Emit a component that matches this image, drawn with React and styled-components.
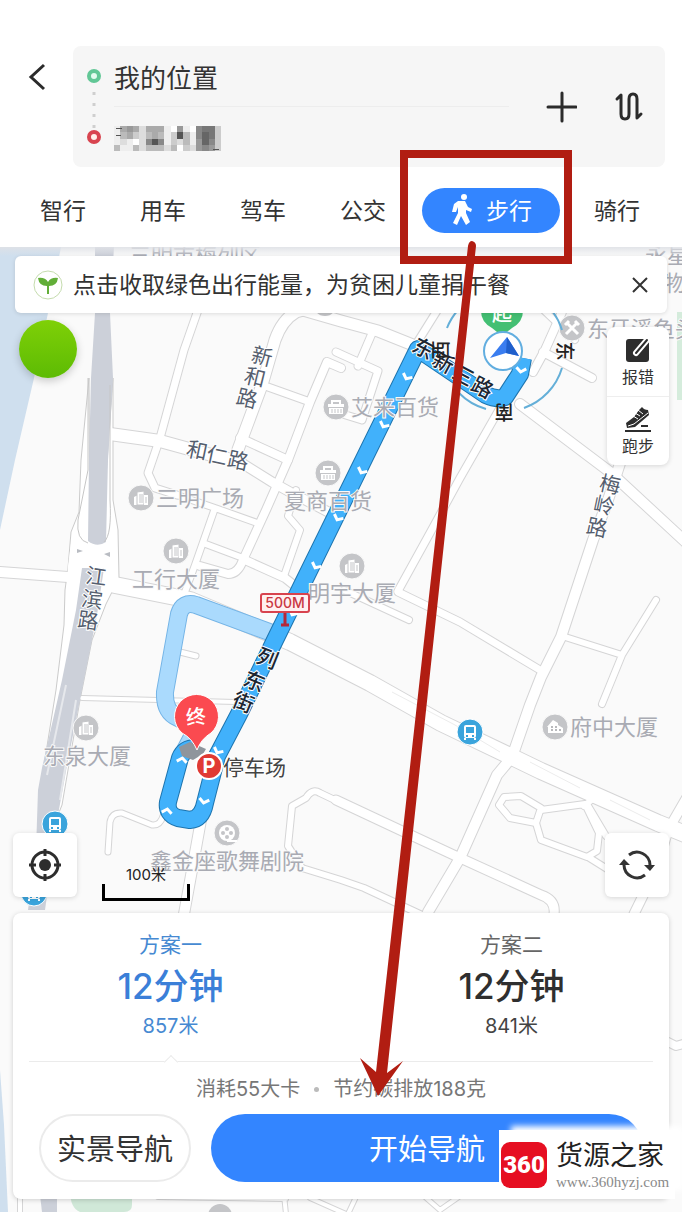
import { useState } from 'react'
import styled, { createGlobalStyle } from 'styled-components'

const tabs = ['智行', '用车', '驾车', '公交', '步行', '骑行']

const plans = [
  { name: '方案一', time: '12分钟', distance: '857米' },
  { name: '方案二', time: '12分钟', distance: '841米' }
]

const roads = [
  { d: 'M205 290L184 350L160 438L148 473L155 488L177 495', w: 7 },
  { d: 'M110 434L160 441L200 452L240 462', w: 12 },
  { d: 'M240 462L272 482L290 492L336 516', w: 9 },
  { d: 'M318 306L296 312Q282 320 275 340L262 385L236 455', w: 11 },
  { d: 'M296 308L341 321L378 331L418 347', w: 11 },
  { d: 'M268 387L310 402', w: 7 },
  { d: 'M341 368L327 362L310 402L288 460L266 510L243 560Q238 574 228 574L200 566', w: 8 },
  { d: 'M240 438L288 460', w: 8 },
  { d: 'M177 495L215 508L260 524M215 508L195 565L185 592M203 543L243 558', w: 6 },
  { d: 'M245 560L285 578L300 590', w: 8 },
  { d: 'M284 576L300 530L288 516L296 490', w: 6 },
  { d: 'M0 572L68 577', w: 10 },
  { d: 'M110 584L190 600L290 642L370 683L441 723L512 757L541 771L658 823L690 836', w: 16 },
  { d: 'M626 445L608 500L593 540L561 637L541 677L530 705L512 757L497 775L460 858L428 912', w: 10 },
  { d: 'M520 404L610 472L690 546', w: 10 },
  { d: 'M500 408L460 478L430 533L398 591', w: 7 },
  { d: 'M398 592L460 622L540 670', w: 7 },
  { d: 'M344 590L409 620', w: 6 },
  { d: 'M562 636L622 655L656 600M622 655L602 704', w: 6 },
  { d: 'M341 803L320 793Q312 788 306 798L292 806L288 846L302 868L341 880L364 888L422 915', w: 6 },
  { d: 'M336 800L400 830L458 857L541 895Q556 900 554 914', w: 9 },
  { d: 'M504 797L521 796L541 808L536 823L510 818L499 805Z', w: 6 },
  { d: 'M541 810L585 804L599 833L597 851L587 857L541 840L536 823M584 806L600 793M587 804L606 836M588 857L612 872', w: 6 },
  { d: 'M690 792L668 830L658 865L634 914', w: 9 },
  { d: 'M82 698L236 702', w: 4 },
  { d: 'M108 852L110 822Q112 812 122 813L152 825Q160 826 163 816', w: 5 },
  { d: 'M201 820L192 870L184 914', w: 10 },
  { d: 'M180 652L196 656', w: 5 },
  { d: 'M336 352L378 371L362 420L336 412M373 331L358 366', w: 7 },
  { d: 'M415 346L450 290', w: 7 },
  { d: 'M533 372L545 350L562 312M543 352L592 378', w: 8 },
  { d: 'M533 300L575 340', w: 6 },
  { d: 'M664 1040L676 1046L690 1042', w: 8 },
  { d: 'M20 1195L20 1214M158 1197L286 1199M284 1195L286 1214M310 1198L346 1214M356 1197L348 1214M424 1196L440 1210L460 1196', w: 4 }
]

const places = [
  { text: '三明广场', x: 156, y: 506, ix: 141, iy: 498 },
  { text: '工行大厦', x: 132, y: 587, ix: 176, iy: 551 },
  { text: '明宇大厦', x: 308, y: 601, ix: 352, iy: 566 },
  { text: '东泉大厦', x: 43, y: 764, ix: 86, iy: 728 },
  { text: '艾来百货', x: 351, y: 415, ix: 336, iy: 407, kind: 'shop' },
  { text: '夏商百货', x: 284, y: 509, ix: 328, iy: 473, kind: 'shop' },
  { text: '府中大厦', x: 570, y: 735, ix: 555, iy: 727, kind: 'house' },
  { text: '鑫金座歌舞剧院', x: 150, y: 869, ix: 227, iy: 833, kind: 'film' },
  { text: '东牙溪鱼头', x: 587, y: 337, ix: 572, iy: 328, kind: 'food' }
]

const streetNames = [
  { text: '新和路', turn: 14, at: [[262, 357], [255, 378], [247, 399]] },
  { text: '和仁路', turn: 12, at: [[197, 451], [217, 456], [238, 461]] },
  { text: '江滨路', turn: 8, at: [[96, 577], [92, 600], [88, 621]] },
  { text: '梅岭路', turn: 12, at: [[610, 485], [604, 506], [597, 528]] },
  { text: '列东街', turn: 22, dark: true, at: [[267, 659], [254, 682], [243, 703]] },
  { text: '东新三路', turn: 28, dark: true, at: [[423, 349], [443, 363], [463, 376], [482, 388]] }
]

const chevrons = [
  [407, 377, 26], [384, 425, 26], [362, 471, 26], [338, 518, 26], [316, 566, 26],
  [293, 613, 26], [521, 370, 10], [218, 751, 26], [204, 801, 12], [182, 760, 190], [167, 811, 190]
]

// one hex digit of grey per cell
const mosaic = [
  'ea9adaaaef9ef877c',
  'ebacdbabec5be867c',
  'edefd858ecdbe968c',
  'beebdbbbdbfcd989c'
]

function Chevron({ x, y, turn }) {
  return (
    <path
      d="M-5 -2L0 2L5 -2"
      transform={`translate(${x} ${y}) rotate(${turn})`}
      fill="none"
      stroke="#fff"
      strokeWidth="3"
    />
  )
}

function PlaceIcon({ x, y, kind }) {
  return (
    <g transform={`translate(${x} ${y})`}>
      <circle r="13" fill="#c4c5c8" stroke="#fafafa" />
      {!kind && (
        <g fill="#fff">
          <path d="M-7 7V-1L-3 -3V7Z" />
          <path d="M-4 7V-6L3 -7V7Z" stroke="#c4c5c8" />
          <path d="M3 7V-3H7V7Z" />
          <path d="M-1 -4V5M1 -4V5M5 -1V5" stroke="#c4c5c8" />
        </g>
      )}
      {kind === 'shop' && (
        <g fill="#fff">
          <path d="M-8 -3H8V0H-8ZM-7 1H7V7H-7Z" />
          <path d="M-4 -3V-6H4V-3" fill="none" stroke="#fff" strokeWidth="2" />
          <path d="M-4 2V6M-1 2V6M2 2V6M5 2V6" stroke="#c4c5c8" />
        </g>
      )}
      {kind === 'house' && (
        <g>
          <path d="M-8 0L-2 -7L3 -4V-2L8 1V6H-7V0Z" fill="#fff" />
          <path d="M-4 0H-2M0 0H2M-4 3H-2M0 3H2M4 3H6" stroke="#b8b9bc" strokeWidth="2" />
        </g>
      )}
      {kind === 'film' && (
        <g>
          <circle r="8" fill="#fff" />
          <g fill="#c4c5c8">
            <circle cy="-4" r="2" />
            <circle cy="4" r="2" />
            <circle cx="-4" r="2" />
            <circle cx="4" r="2" />
          </g>
          <path d="M0 8H10" stroke="#fff" strokeWidth="2" />
        </g>
      )}
      {kind === 'food' && (
        <path d="M-6 -6L6 6M6 -6L-6 6M-7 -3L-3 -7M3 -7L7 -3" stroke="#fff" strokeWidth="3" />
      )}
    </g>
  )
}

function BusStop({ x, y }) {
  return (
    <g transform={`translate(${x} ${y})`}>
      <circle r="13" fill="#3aa4dc" stroke="#fff" />
      <rect x="-6" y="-7" width="12" height="13" rx="2" fill="#fff" />
      <rect x="-4" y="-5" width="8" height="6" fill="#3aa4dc" />
      <path d="M-4 4H-2M2 4H4" stroke="#3aa4dc" strokeWidth="2" />
      <path d="M-5 6V8M5 6V8" stroke="#fff" strokeWidth="2" />
    </g>
  )
}

function CityMap() {
  return (
    <MapDrawing viewBox="0 247 682 965" preserveAspectRatio="xMidYMin slice" role="img" aria-label="地图">
      <defs>
        <linearGradient id="shade" x1="0" y1="0" x2="0" y2="1">
          <stop offset="0" stopColor="#dfe1e6" stopOpacity="0.9" />
          <stop offset="1" stopColor="#dfe1e6" stopOpacity="0" />
        </linearGradient>
      </defs>
      <rect y="247" width="682" height="965" fill="#fafafa" />

      {/* water and parks */}
      <path d="M0 247H61L48 313L34 378L15 460L0 530Z" fill="#cfdfee" />
      <path d="M0 1070L4 1125L8 1212H0Z" fill="#cfdfee" />
      <path d="M677 312H682V400H677Z" fill="#d5ecdc" />
      <path d="M70 1190H132V1205Q132 1212 124 1212H80Q70 1208 70 1190Z" fill="#d0e8d8" />

      {/* streets */}
      <g fill="none" stroke="#d5d5d6" strokeLinejoin="round" strokeLinecap="round">
        {roads.map(({ d, w }) => (
          <path key={d} d={d} strokeWidth={w + 2} />
        ))}
      </g>
      <path
        d="M89 378L81 460L79 512L71 532L68 568L65 590L64 625L56 690L40 790L90 560ZM113 378V500L118 530L119 578L106 604L92 640L80 700L62 805L52 830L60 700L100 560Z"
        fill="#fff"
        stroke="#cbcbcb"
      />
      <path d="M72 536L81 515H112L117 532V575L104 600H66L68 566Z" fill="#fff" />
      <g fill="none" stroke="#fff" strokeLinejoin="round" strokeLinecap="round">
        {roads.map(({ d, w }) => (
          <path key={d} d={d} strokeWidth={w} />
        ))}
      </g>
      <path d="M392 692L455 725L500 752M530 762L580 788M610 800L650 820" stroke="#ececec" fill="none" />
      <path d="M95 247H114L110 313L113 378L108 460L106 542Q97 548 88 541L89 460L91 378L95 313Z" fill="#ccd0d9" />
      <path d="M82 568H104L97 615L82 690L68 760L58 815L56 832L45 910H28L36 850L38 790L42 768L62 680L76 610Z" fill="#ccd0d9" />
      <path d="M66 685L47 775M76 700L60 800" stroke="#e6e8ec" strokeWidth="2" fill="none" />
      <path d="M88 378V470L78 520Q76 540 88 543M110 385V500Q112 535 104 542" stroke="#c6c6c6" fill="none" />
      <path d="M40 1195H57V1212H42Z" fill="#ccd0d9" />
      <path d="M77 549L83 551L77 553ZM110 552L104 554L110 557Z" fill="#b9bcc2" />

      {/* labels */}
      <PlaceText x="129" y="263">三明市梅列区</PlaceText>
      <PlaceText x="645" y="263">永星</PlaceText>
      <PlaceText x="664" y="291">物</PlaceText>
      <circle cx="325" cy="304" r="12" fill="#c4c5c8" />
      <circle cx="220" cy="1216" r="12" fill="#c4c5c8" />
      <BusStop x={55} y={824} />
      <BusStop x={34} y={893} />
      <BusStop x={470} y={732} />

      {/* routes */}
      <g fill="none" strokeLinejoin="round">
        <path d="M272 633L196 605Q183 601 179 614L165 692Q164 712 178 718L190 724M193 735L184 752" stroke="#74b4e6" strokeWidth="18" />
        <path d="M272 633L196 605Q183 601 179 614L165 692Q164 712 178 718L190 724M193 735L184 752" stroke="#aadafd" strokeWidth="16" />
        <g stroke="#1d74ae" strokeWidth="18">
          <path id="walk" d="M523 358L520 374L505 397Q497 400 486 395L418 349L275 640L239 714L217 756L205 803Q202 819 190 820L178 818Q166 814 168 802L180 758Q184 748 196 748" />
        </g>
        <use href="#walk" stroke="#41b1fb" strokeWidth="16" />
      </g>
      {chevrons.map(([x, y, turn]) => (
        <Chevron key={`${x}-${y}`} x={x} y={y} turn={turn} />
      ))}

      {places.map(({ text, x, y, ix, iy, kind }) => (
        <g key={text}>
          <PlaceIcon x={ix} y={iy} kind={kind} />
          <PlaceText x={x} y={y}>{text}</PlaceText>
        </g>
      ))}
      {streetNames.map(({ text, turn, dark, at }) =>
        at.map(([x, y], i) => (
          <StreetText
            key={text[i] + x}
            $dark={dark}
            transform={`translate(${x} ${y}) rotate(${turn})`}
            y="7"
          >
            {text[i]}
          </StreetText>
        ))
      )}

      {/* 500 metre mark */}
      <path d="M285 612V624M281 625H289" stroke="#b3283a" strokeWidth="3" />
      <rect x="261" y="594" width="48" height="18" rx="2" fill="#fff0f0" stroke="#d8434e" strokeWidth="2" />
      <MarkText x="285" y="608">500M</MarkText>

      {/* destination */}
      <path d="M179 747L190 742L206 749L203 754L193 760L182 756Z" fill="#8f959c" />
      <path
        d="M197 750Q192 738 182 733A22 22 0 1 1 211 733Q201 739 197 750Z"
        fill="#fb4a50"
        stroke="#fff"
      />
      <PinText x="196" y="724" transform="rotate(-6 196 718)">终</PinText>
      <circle cx="209" cy="766" r="13" fill="#e03a34" stroke="#fff" strokeWidth="2" />
      <ParkText x="209" y="773">P</ParkText>
      <StopText x="223" y="775">停车场</StopText>

      {/* start and compass */}
      <g fill="none" stroke="#64afd8" strokeWidth="2">
        <path d="M447 328A61 61 0 0 1 458 310M553 312A61 61 0 0 1 562 330M562 368A61 61 0 0 1 524 408M459 393A61 61 0 0 0 486 409" />
      </g>
      <path d="M481 308H523Q524 322 512 328L502 336L492 328Q480 322 481 308Z" fill="#43bf73" />
      <PinText x="502" y="321">起</PinText>
      <circle cx="503" cy="351" r="19" fill="#fff" stroke="#62aee0" strokeWidth="2" />
      <path d="M507 337L519 356L506 353L490 358Z" fill="#3a7df0" />
      <path d="M507 337L519 356L506 353Z" fill="#1f5fcb" />
      <CompassText transform="translate(565 351) rotate(90)" y="7">东</CompassText>
      <CompassText transform="translate(504 412) rotate(180)" y="7">南</CompassText>
      <CompassText transform="translate(441 350) rotate(270)" y="7">西</CompassText>

      <rect y="247" width="682" height="9" fill="url(#shade)" />
    </MapDrawing>
  )
}

export default function App() {
  const [active, setActive] = useState('步行')
  const [plan, setPlan] = useState(0)

  return (
    <Screen>
      <GlobalStyle />

      <Header>
        <Search>
          <IconButton type="button" aria-label="返回">
            <svg width="20" height="30" viewBox="0 0 20 30">
              <path d="M17 4L4 16L17 28" fill="none" stroke="#2b2b2b" strokeWidth="3" />
            </svg>
          </IconButton>
          <Endpoints>
            <svg width="20" height="91" viewBox="0 0 20 91" aria-hidden="true">
              <circle cx="10" cy="15" r="5" fill="#e4fbef" stroke="#62c796" strokeWidth="4" />
              <path d="M10 31V68" stroke="#cfcfcf" strokeWidth="3" strokeDasharray="3 8" />
              <circle cx="10" cy="76" r="5" fill="#fff0ea" stroke="#d8444f" strokeWidth="4" />
            </svg>
            <Fields>
              <input aria-label="起点" defaultValue="我的位置" />
              <Destination type="button" aria-label="终点">
                <svg width="108" height="26" viewBox="0 0 108 26" shapeRendering="crispEdges">
                  {mosaic.map((row, y) =>
                    [...row].map((c, x) => (
                      <rect
                        key={`${x}-${y}`}
                        x={x * 6.3}
                        y={y * 6.3}
                        width="6.4"
                        height="6.4"
                        fill={`#${c}${c}${c}`}
                      />
                    ))
                  )}
                  <path d="M2 2H8M2 9H7M99 23H105" stroke="#555" />
                </svg>
              </Destination>
            </Fields>
            <IconButton type="button" aria-label="添加途经点">
              <svg width="32" height="32" viewBox="0 0 32 32">
                <path d="M17 2V30M3 16H31" stroke="#2b2b2b" strokeWidth="3" strokeLinecap="round" />
              </svg>
            </IconButton>
            <IconButton type="button" aria-label="交换起终点">
              <svg width="32" height="32" viewBox="0 0 32 32">
                <path
                  d="M4 8L8 4V23Q8 28 12 28Q16 28 16 23V8Q16 3 20 3Q24 3 24 8V27L28 23"
                  fill="none"
                  stroke="#2b2b2b"
                  strokeWidth="3"
                  strokeLinecap="round"
                  strokeLinejoin="round"
                />
              </svg>
            </IconButton>
          </Endpoints>
        </Search>

        <Tabs>
          {tabs.map((tab) => (
            <Tab key={tab} type="button" $active={tab === active} onClick={() => setActive(tab)}>
              {tab === '步行' && (
                <svg width="24" height="32" viewBox="0 0 24 32" aria-hidden="true">
                  <circle cx="14" cy="4" r="3" fill="currentColor" />
                  <path
                    d="M8 8H15L18 14L22 16L21 19L16 17V20L20 29L16 32L11 23L7 32L3 30L8 20V14L6 19H2L4 11Z"
                    fill="currentColor"
                  />
                </svg>
              )}
              {tab}
            </Tab>
          ))}
        </Tabs>
      </Header>

      <MapArea>
        <CityMap />

        <Notice>
          <svg width="30" height="30" viewBox="0 0 30 30" aria-hidden="true">
            <circle cx="15" cy="15" r="14" fill="#fff" stroke="#c5dcae" />
            <path
              d="M14 24V16Q6 16 5 8Q12 7 15 12Q18 7 25 8Q24 16 16 16V24Z"
              fill="#62ae38"
            />
          </svg>
          <p>点击收取绿色出行能量，为贫困儿童捐午餐</p>
          <IconButton type="button" aria-label="关闭">
            <svg width="18" height="18" viewBox="0 0 18 18">
              <path d="M2 2L16 16M16 2L2 16" stroke="#333" strokeWidth="2" />
            </svg>
          </IconButton>
        </Notice>

        <SideRow>
          <EnergyBall type="button" aria-label="绿色能量" />
          <Tools>
            <button type="button">
              <svg width="26" height="26" viewBox="0 0 26 26" aria-hidden="true">
                <rect x="1" y="2" width="23" height="23" rx="3" fill="#2d2d2d" />
                <path d="M11 16L22 3" stroke="#fff" strokeWidth="6" strokeLinecap="round" />
                <path d="M11 16L22 3" stroke="#2d2d2d" strokeWidth="2" strokeLinecap="round" />
              </svg>
              报错
            </button>
            <button type="button">
              <svg width="28" height="26" viewBox="0 0 28 26" aria-hidden="true">
                <path d="M2 17L10 11L15 4L18 1Q20 4 24 4L25 9L11 21L3 22Z" fill="#2d2d2d" />
                <path d="M9 10L14 13M11 7L16 10M14 4L19 8M4 20L10 18L24 7" fill="none" stroke="#fff" />
                <path d="M1 25H27M17 20H24" stroke="#2d2d2d" strokeWidth="2" />
              </svg>
              跑步
            </button>
          </Tools>
        </SideRow>

        <BottomRow>
          <SquareButton type="button" aria-label="定位">
            <svg width="34" height="34" viewBox="0 0 34 34">
              <circle cx="17" cy="17" r="13" fill="none" stroke="#2d2d2d" strokeWidth="3" />
              <circle cx="17" cy="17" r="6" fill="#2d2d2d" />
              <path d="M17 1V8M17 26V33M1 17H8M26 17H33" stroke="#2d2d2d" strokeWidth="3" />
            </svg>
          </SquareButton>
          <Scale>100米</Scale>
          <SquareButton type="button" aria-label="刷新">
            <svg width="36" height="32" viewBox="0 0 36 32">
              <path d="M10 6A13 13 0 0 1 31 16M26 26A13 13 0 0 1 5 16" fill="none" stroke="#333" strokeWidth="3" />
              <path d="M25 16H36L31 22ZM0 16L5 10L11 16Z" fill="#333" />
            </svg>
          </SquareButton>
        </BottomRow>

        <Panel>
          <Plans>
            {plans.map(({ name, time, distance }, i) => (
              <Plan key={name} type="button" $active={i === plan} onClick={() => setPlan(i)}>
                <span>{name}</span>
                <strong>{time}</strong>
                <em>{distance}</em>
              </Plan>
            ))}
          </Plans>
          <Stats>
            <span>消耗55大卡</span>
            <i />
            <span>节约碳排放188克</span>
          </Stats>
          <Actions>
            <OutlineButton type="button">实景导航</OutlineButton>
            <StartButton type="button">开始导航</StartButton>
          </Actions>
        </Panel>
      </MapArea>

      <Annotation viewBox="0 0 682 1212" preserveAspectRatio="xMidYMin slice" aria-hidden="true">
        <rect x="404" y="154" width="164" height="106" fill="none" stroke="#b11d12" strokeWidth="8" />
        <path
          d="M468 246Q469 241 472 241Q476 242 476 246L387 1073L403 1061L378 1096L360 1058L376 1072Z"
          fill="#b11d12"
        />
      </Annotation>

      <Watermark href="http://www.360hyzj.com">
        <Logo>360</Logo>
        <div>
          <b>货源之家</b>
          <small>www.360hyzj.com</small>
        </div>
      </Watermark>
    </Screen>
  )
}

const GlobalStyle = createGlobalStyle`
  * {
    box-sizing: border-box;
  }

  body {
    margin: 0;
    background: #fafafa;
    color: #333;
    font-family: Inter, 'Noto Sans CJK SC', sans-serif;
  }

  button,
  input {
    padding: 0;
    border: 0;
    background: none;
    color: inherit;
    font: inherit;
  }

  button {
    cursor: pointer;
  }

  svg {
    display: block;
    flex-shrink: 0;
  }

  p {
    margin: 0;
  }
`

const Screen = styled.div`
  position: relative;
  display: flex;
  flex-direction: column;
  min-height: 100vh;
  overflow: hidden;
`

const Header = styled.header`
  padding-top: 46px;
  background: #fff;
`

const Search = styled.div`
  display: flex;
  align-items: flex-start;
  gap: 26px;
  padding: 0 17px 0 27px;

  > button {
    margin-top: 15px;
  }
`

const IconButton = styled.button`
  display: flex;
  align-items: center;
  justify-content: center;
`

const Endpoints = styled.div`
  flex: 1;
  display: flex;
  align-items: center;
  gap: 36px;
  padding: 15px 20px 15px 11px;
  border-radius: 8px;
  background: #f6f6f6;
`

const Fields = styled.div`
  flex: 1;
  min-width: 0;
  margin-left: -26px;
  font-size: 26px;
  line-height: 30px;

  input {
    display: block;
    width: 100%;
    height: 45px;
    padding-bottom: 14px;
    border-bottom: 1px solid #ededed;
    outline: none;
  }
`

const Destination = styled.button`
  display: flex;
  align-items: flex-end;
  width: 100%;
  height: 45px;
`

const Tabs = styled.nav`
  display: flex;
  align-items: center;
  justify-content: space-between;
  padding: 21px 42px 14px 40px;
`

const Tab = styled.button`
  display: flex;
  align-items: center;
  justify-content: center;
  gap: 12px;
  height: 45px;
  margin: ${({ $active }) => ($active ? '0 -20px 0 -18px' : '0')};
  padding: ${({ $active }) => ($active ? '0 28px 3px' : '0 0 3px')};
  border-radius: 24px;
  background: ${({ $active }) => ($active ? '#3385ff' : 'transparent')};
  color: ${({ $active }) => ($active ? '#fff' : '#333')};
  font-size: 23px;
`

const MapArea = styled.main`
  position: relative;
  flex: 1;
  display: flex;
  flex-direction: column;
  padding: 9px 13px 13px;
`

const MapDrawing = styled.svg`
  position: absolute;
  inset: 0;
  width: 100%;
  height: 100%;
`

const PlaceText = styled.text`
  fill: #a9abb3;
  stroke: #fafafa;
  stroke-width: 2px;
  paint-order: stroke;
  font-size: 22px;
`

const StreetText = styled.text`
  fill: ${({ $dark }) => ($dark ? '#1d2733' : '#555e6e')};
  stroke: #fff;
  stroke-width: 2px;
  paint-order: stroke;
  font-size: 21px;
  font-weight: ${({ $dark }) => ($dark ? 500 : 400)};
  text-anchor: middle;
`

const StopText = styled.text`
  fill: #444;
  stroke: #fff;
  stroke-width: 2px;
  paint-order: stroke;
  font-size: 21px;
`

const MarkText = styled.text`
  fill: #c93743;
  font-size: 14px;
  font-weight: 500;
  text-anchor: middle;
`

const PinText = styled.text`
  fill: #fff;
  font-size: 20px;
  font-weight: 500;
  text-anchor: middle;
`

const ParkText = styled(PinText)`
  font-weight: 700;
`

const CompassText = styled.text`
  fill: #222;
  font-size: 19px;
  font-weight: 500;
  text-anchor: middle;
`

const Notice = styled.section`
  position: relative;
  display: flex;
  align-items: center;
  gap: 10px;
  height: 57px;
  margin: 0 2px;
  padding: 0 18px;
  border-radius: 6px;
  background: #fff;
  box-shadow: 0 1px 4px rgba(0, 0, 0, 0.12);

  p {
    flex: 1;
    font-size: 23px;
    line-height: 30px;
    white-space: nowrap;
  }
`

const SideRow = styled.div`
  position: relative;
  display: flex;
  align-items: flex-start;
  justify-content: space-between;
  padding: 7px 0 0 6px;
`

const EnergyBall = styled.button`
  width: 58px;
  height: 58px;
  border-radius: 50%;
  background: linear-gradient(#7fd007, #5dbb04);
  box-shadow: 0 3px 8px rgba(0, 0, 0, 0.2);
`

const Tools = styled.div`
  width: 62px;
  margin-top: 7px;
  border-radius: 8px;
  background: #fff;
  box-shadow: 0 1px 5px rgba(0, 0, 0, 0.15);

  button {
    display: flex;
    flex-direction: column;
    align-items: center;
    justify-content: center;
    gap: 4px;
    width: 100%;
    height: 69px;
    font-size: 16px;
    line-height: 20px;
  }

  button + button {
    border-top: 1px solid #eee;
  }
`

const BottomRow = styled.div`
  position: relative;
  display: flex;
  align-items: flex-end;
  margin-top: auto;
  padding-bottom: 16px;
`

const SquareButton = styled.button`
  display: flex;
  align-items: center;
  justify-content: center;
  width: 64px;
  height: 64px;
  border-radius: 6px;
  background: #fff;
  box-shadow: 0 1px 5px rgba(0, 0, 0, 0.15);

  &:last-child {
    margin-left: auto;
  }
`

const Scale = styled.div`
  width: 88px;
  height: 32px;
  margin-left: 25px;
  color: #222;
  font-size: 15px;
  line-height: 20px;
  text-align: center;

  &::after {
    content: '';
    display: block;
    height: 14px;
    border: solid #000;
    border-width: 0 3px 3px;
    margin-top: -1px;
  }
`

const Panel = styled.section`
  position: relative;
  padding: 16px 26px 17px;
  border-radius: 8px;
  background: #fff;
  box-shadow: 0 1px 5px rgba(0, 0, 0, 0.18);
`

const Plans = styled.div`
  position: relative;
  display: grid;
  grid-template-columns: 1fr 1fr;
  margin: 0 -39px;
  padding-bottom: 21px;

  &::after {
    content: '';
    position: absolute;
    right: 29px;
    bottom: 0;
    left: 29px;
    border-bottom: 1px solid #ebebeb;
  }
`

const Plan = styled.button`
  position: relative;
  display: flex;
  flex-direction: column;
  align-items: center;
  color: ${({ $active }) => ($active ? '#4689d2' : '#444')};

  span {
    color: ${({ $active }) => ($active ? '#4689d2' : '#666')};
    font-size: 21px;
    line-height: 32px;
  }

  strong {
    color: ${({ $active }) => ($active ? '#3b7fd8' : '#2f2f2f')};
    font-size: 35px;
    font-weight: 500;
    line-height: 50px;
  }

  em {
    font-size: 20px;
    font-style: normal;
    line-height: 30px;
  }

  /* pointer on the divider under the chosen plan */
  &::after {
    content: '';
    display: ${({ $active }) => ($active ? 'block' : 'none')};
    position: absolute;
    z-index: 1;
    bottom: -26px;
    width: 9px;
    height: 9px;
    border: solid #ebebeb;
    border-width: 1px 0 0 1px;
    background: #fff;
    transform: rotate(45deg);
  }
`

const Stats = styled.div`
  display: flex;
  align-items: center;
  justify-content: center;
  gap: 14px;
  padding: 12px 0 10px;
  color: #777;
  font-size: 20px;
  line-height: 30px;

  i {
    width: 5px;
    height: 5px;
    border-radius: 50%;
    background: #bbb;
  }
`

const Actions = styled.div`
  display: flex;
  gap: 20px;
`

const OutlineButton = styled.button`
  width: 152px;
  height: 68px;
  padding-bottom: 3px;
  border: 2px solid #ebebeb;
  border-radius: 34px;
  font-size: 29px;
`

const StartButton = styled.button`
  flex: 1;
  height: 68px;
  padding-bottom: 3px;
  border-radius: 34px;
  background: #3385ff;
  color: #fff;
  font-size: 29px;
`

const Annotation = styled.svg`
  position: absolute;
  inset: 0;
  width: 100%;
  height: 100%;
  pointer-events: none;
`

const Watermark = styled.a`
  position: absolute;
  right: 7px;
  bottom: 13px;
  display: flex;
  align-items: center;
  gap: 9px;
  width: 176px;
  height: 69px;
  padding: 0 2px;
  background: #fff;
  box-shadow: 10px -6px 6px -2px #fff;
  color: #222;
  text-decoration: none;

  b,
  small {
    display: block;
    white-space: nowrap;
  }

  b {
    font-size: 27px;
    font-weight: 400;
    line-height: 34px;
  }

  small {
    color: #8a8a8a;
    font-family: 'Liberation Serif', serif;
    font-size: 15px;
    line-height: 18px;
  }
`

const Logo = styled.span`
  flex-shrink: 0;
  width: 46px;
  height: 46px;
  border-radius: 9px;
  background: #e60f22;
  color: #fff;
  font-family: Roboto, sans-serif;
  font-size: 24px;
  font-weight: 900;
  line-height: 46px;
  text-align: center;
`
